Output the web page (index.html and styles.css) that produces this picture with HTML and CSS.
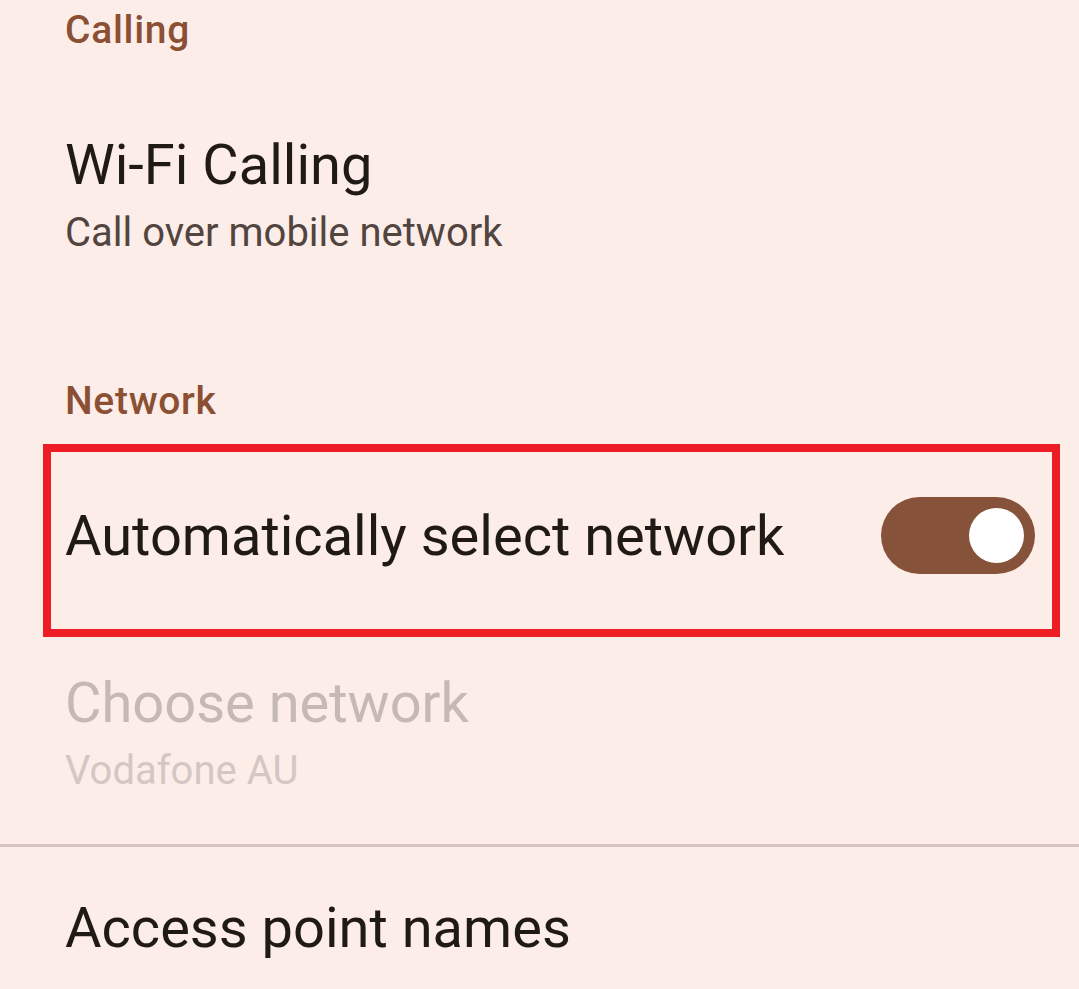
FILE: index.html
```html
<!DOCTYPE html>
<html lang="en">
<head>
<meta charset="utf-8">
<title>Mobile network</title>
<link rel="stylesheet" href="styles.css">
</head>
<body>
<main class="settings">
  <h2 class="category category--first">Calling</h2>
  <div class="pref pref--wifi">
    <div class="pref-title">Wi-Fi Calling</div>
    <div class="pref-summary">Call over mobile network</div>
  </div>

  <h2 class="category category--network">Network</h2>
  <div class="highlight">
    <div class="pref-row">
      <div class="pref-title">Automatically select network</div>
      <div class="switch switch--on" role="switch" aria-checked="true">
        <span class="switch-thumb"></span>
      </div>
    </div>
  </div>

  <div class="pref pref--disabled pref--choose">
    <div class="pref-title">Choose network</div>
    <div class="pref-summary">Vodafone AU</div>
  </div>

  <hr class="divider">

  <div class="pref pref--apn">
    <div class="pref-title">Access point names</div>
  </div>
</main>
</body>
</html>
```

FILE: styles.css
```css
html, body {
  margin: 0;
  padding: 0;
}

body {
  background: #fcede9;
  font-family: Roboto, "Noto Sans", "Liberation Sans", sans-serif;
  color: #201a17;
  width: 1079px;
  height: 989px;
  overflow: hidden;
}

.settings {
  display: flex;
  flex-direction: column;
}

/* section headers */
.category {
  margin: 0;
  padding-left: 65px;
  font-size: 39px;
  font-weight: 500;
  line-height: 60px;
  letter-spacing: 0.7px;
  color: #8b5034;
}

.category--network {
  margin-top: 110px;
}

/* preference rows */
.pref {
  padding-left: 65px;
}

.pref-title {
  font-size: 56px;
  line-height: 64px;
  font-weight: 400;
  color: #201a17;
}

.pref-summary {
  margin-top: 8px;
  font-size: 40px;
  line-height: 56px;
  color: #52443f;
}

.pref--wifi {
  margin-top: 73px;
}

.pref--choose {
  margin-top: 34px;
}

.pref--disabled .pref-title {
  color: #c5b9b5;
}

.pref--disabled .pref-summary {
  color: #d4c7c3;
}

.pref--apn {
  margin-top: 49px;
}

/* red outline around the auto-select row */
.highlight {
  margin: 13px 0 0 43px;
  width: 1017px;
  height: 193px;
  box-sizing: border-box;
  border: 8px solid #ee1c25;
}

.pref-row {
  height: 100%;
  box-sizing: border-box;
  display: flex;
  align-items: center;
  justify-content: space-between;
  padding: 0 17px 10px 14px;
}

/* toggle switch */
.switch {
  width: 154px;
  height: 77px;
  border-radius: 39px;
  background: #86523a;
  display: flex;
  align-items: center;
  justify-content: flex-end;
  padding-right: 11px;
  box-sizing: border-box;
}

.switch-thumb {
  width: 55px;
  height: 55px;
  border-radius: 50%;
  background: #ffffff;
}

.divider {
  margin: 45px 0 0;
  border: 0;
  height: 3px;
  background: #d6c4c0;
}
```
